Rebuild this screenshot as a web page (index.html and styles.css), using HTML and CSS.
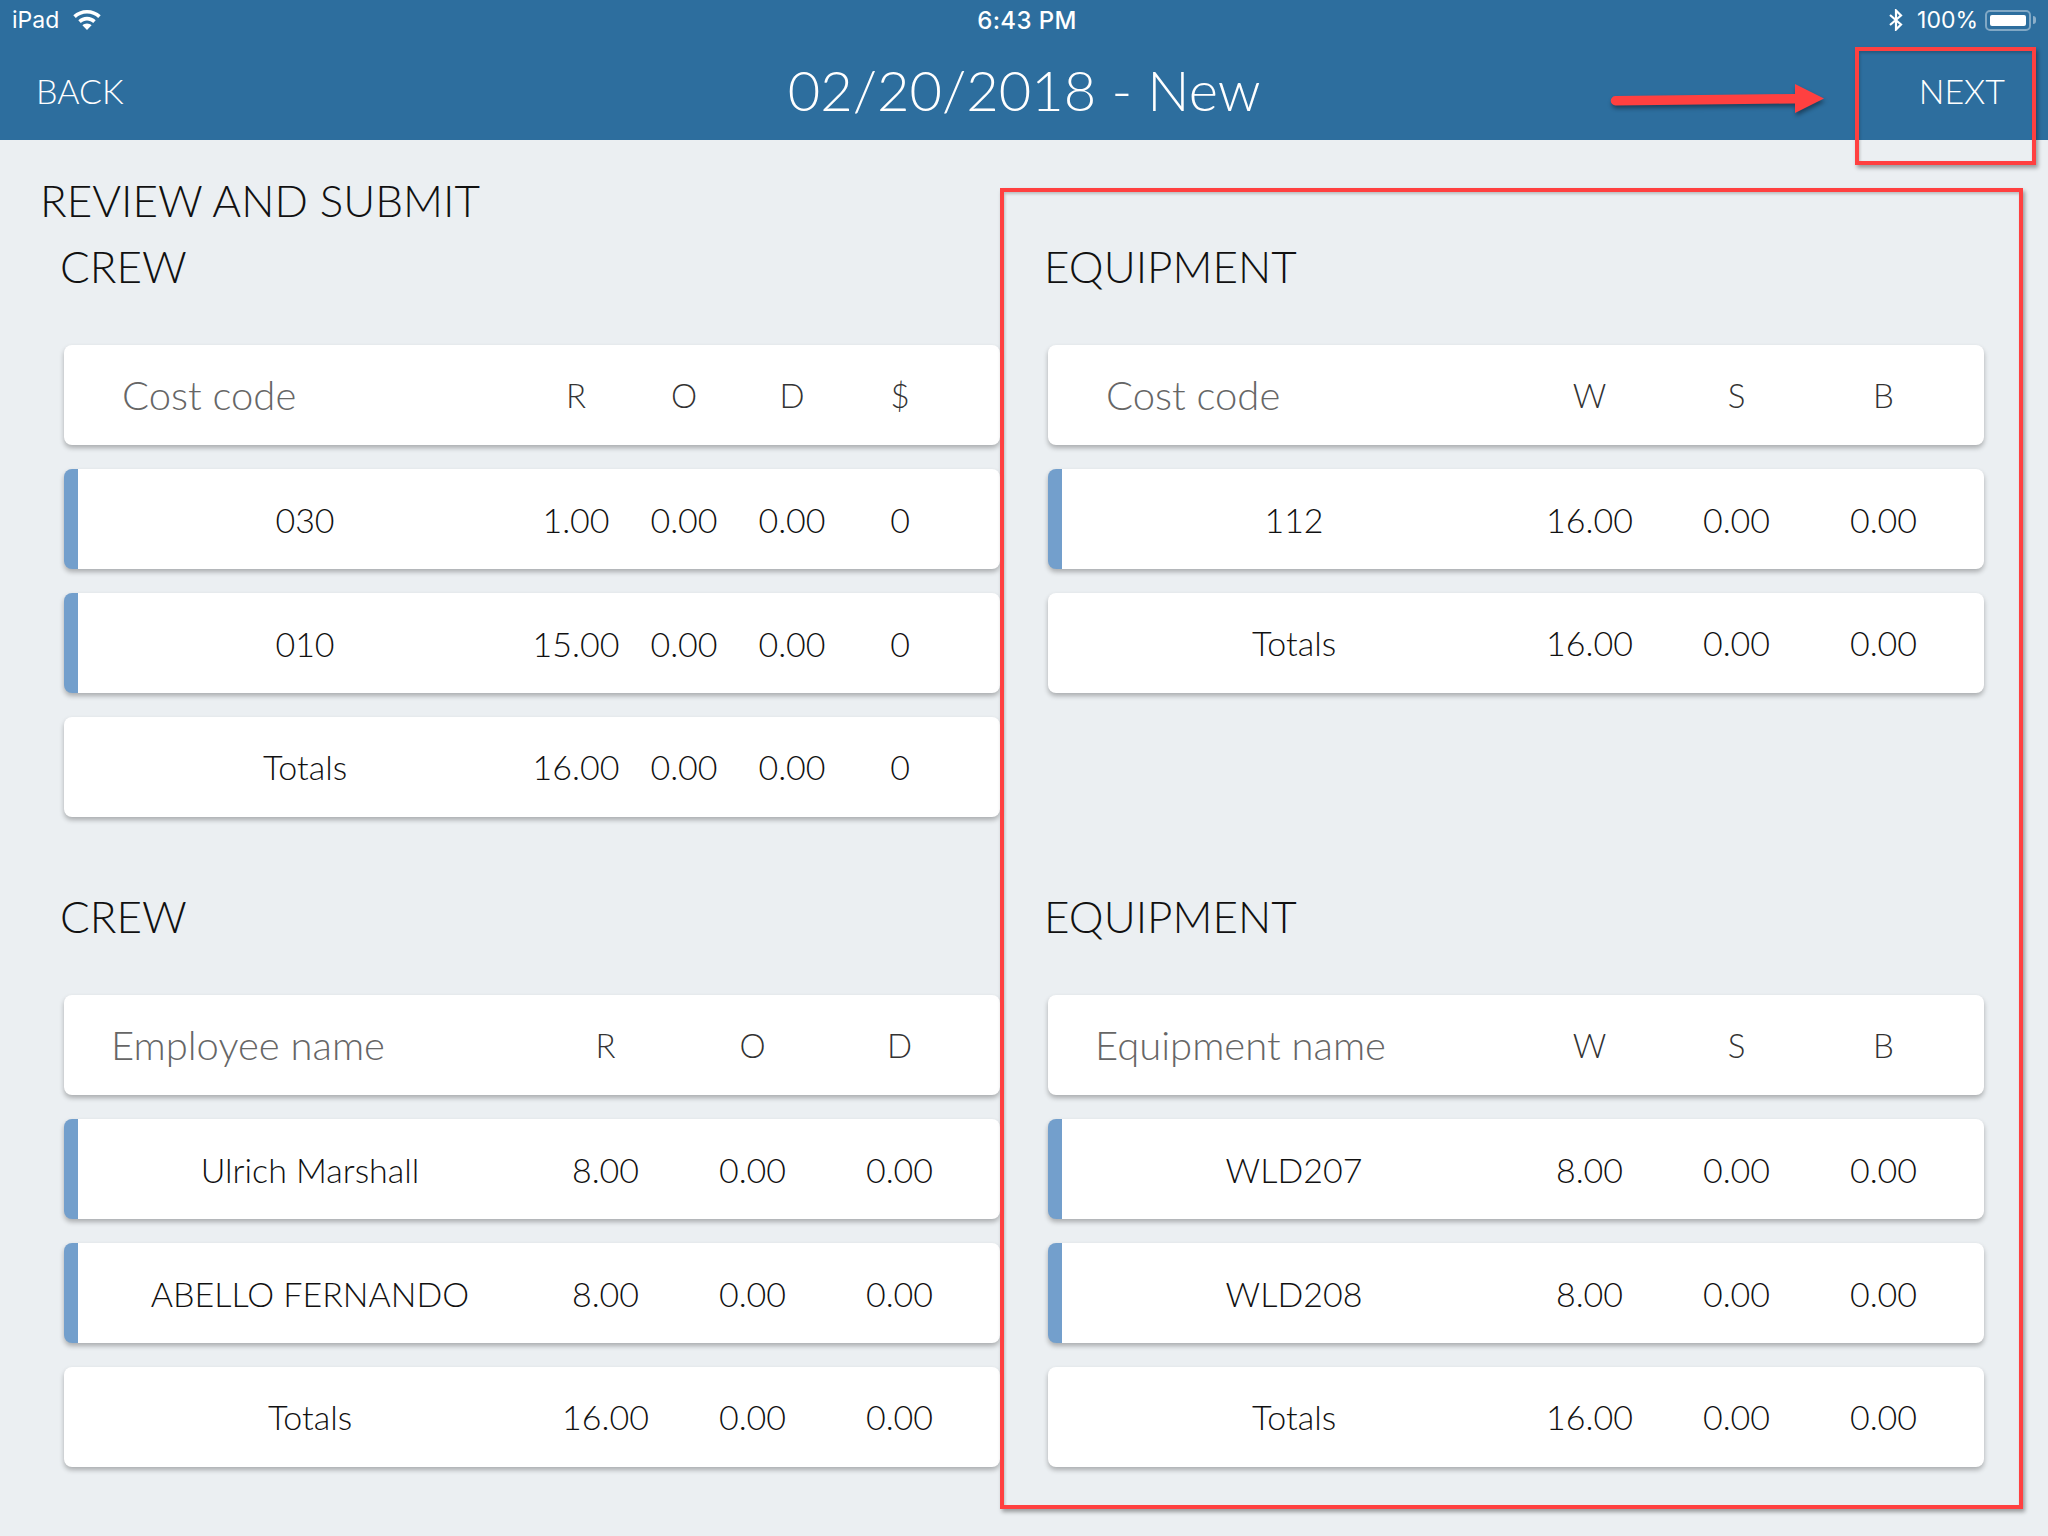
FILE: index.html
```html
<!DOCTYPE html>
<html lang="en">
<head>
<meta charset="utf-8">
<title>Review and submit</title>
<link rel="stylesheet" href="styles.css">
</head>
<body>
<header class="top">
  <div class="status">
    <div class="status-left">
      <span>iPad</span>
      <svg class="wifi" width="28" height="20" viewBox="0 0 28 20"><path fill="#fff" d="M14 0C8.700 0 3.900 2 .3 5.300l2.500 2.700C5.700 5.300 9.600 3.600 14 3.600s8.300 1.700 11.200 4.400l2.500-2.700C24.100 2 19.300 0 14 0zM14 6.800c-3.400 0-6.400 1.300-8.700 3.400l2.500 2.700c1.600-1.500 3.800-2.500 6.200-2.500s4.600 1 6.200 2.500l2.500-2.700c-2.300-2.100-5.300-3.400-8.700-3.400zM14 13.500c-1.800 0-3.400.7-4.600 1.800L14 20l4.600-4.700c-1.200-1.100-2.800-1.800-4.600-1.800z"/></svg>
    </div>
    <div class="status-time">6:43 PM</div>
    <div class="status-right">
      <svg class="bt" width="14" height="22" viewBox="0 0 14 22"><path fill="none" stroke="#fff" stroke-width="2.200" d="M1 6l11 9.500L7 20.500V1.500l5 5L1 16"/></svg>
      <span>100%</span>
      <span class="battery"><span class="battery-fill"></span></span>
      <span class="battery-cap"></span>
    </div>
  </div>
  <nav class="nav">
    <span class="nav-link">BACK</span>
    <h1 class="nav-title">02/20/2018 - New</h1>
    <span class="nav-link">NEXT</span>
  </nav>
</header>

<main class="page">
  <h2 class="page-title">REVIEW AND SUBMIT</h2>
  <div class="board">
    <section class="section">
      <h3 class="section-title">CREW</h3>
      <div class="card head four"><span class="name">Cost code</span><span>R</span><span>O</span><span>D</span><span>$</span></div>
      <div class="card bar four"><span>030</span><span>1.00</span><span>0.00</span><span>0.00</span><span>0</span></div>
      <div class="card bar four"><span>010</span><span>15.00</span><span>0.00</span><span>0.00</span><span>0</span></div>
      <div class="card four"><span>Totals</span><span>16.00</span><span>0.00</span><span>0.00</span><span>0</span></div>
    </section>
    <section class="section right">
      <h3 class="section-title">EQUIPMENT</h3>
      <div class="card head three"><span class="name">Cost code</span><span>W</span><span>S</span><span>B</span></div>
      <div class="card bar three"><span>112</span><span>16.00</span><span>0.00</span><span>0.00</span></div>
      <div class="card three"><span>Totals</span><span>16.00</span><span>0.00</span><span>0.00</span></div>
    </section>
    <section class="section">
      <h3 class="section-title">CREW</h3>
      <div class="card head three wide-name"><span class="name">Employee name</span><span>R</span><span>O</span><span>D</span></div>
      <div class="card bar three"><span>Ulrich Marshall</span><span>8.00</span><span>0.00</span><span>0.00</span></div>
      <div class="card bar three"><span>ABELLO FERNANDO</span><span>8.00</span><span>0.00</span><span>0.00</span></div>
      <div class="card three"><span>Totals</span><span>16.00</span><span>0.00</span><span>0.00</span></div>
    </section>
    <section class="section right">
      <h3 class="section-title">EQUIPMENT</h3>
      <div class="card head three wide-name"><span class="name">Equipment name</span><span>W</span><span>S</span><span>B</span></div>
      <div class="card bar three"><span>WLD207</span><span>8.00</span><span>0.00</span><span>0.00</span></div>
      <div class="card bar three"><span>WLD208</span><span>8.00</span><span>0.00</span><span>0.00</span></div>
      <div class="card three"><span>Totals</span><span>16.00</span><span>0.00</span><span>0.00</span></div>
    </section>
  </div>
</main>

<div class="mark mark-next"></div>
<div class="mark mark-panel"></div>
<svg class="arrow" width="220" height="40" viewBox="0 0 220 40"><path fill="#ff4040" d="M9.500 17 189 15V5l29 14.500L189 34V24.500L9.500 26.500a4.750 4.750 0 0 1 0-9.500z"/></svg>
</body>
</html>
```
FILE: styles.css
```css
* { box-sizing: border-box; }
html, body { margin: 0; padding: 0; }
body {
  width: 2048px;
  height: 1536px;
  position: relative;
  overflow: hidden;
  background: #ebeff2;
  font-family: "Lato", "Liberation Sans", sans-serif;
  font-weight: 300;
  color: #111;
}
.top { height: 140px; background: #2d6e9e; color: #fff; }
.status {
  height: 40px;
  padding: 0 12px 0 12px;
  display: grid;
  grid-template-columns: 1fr auto 1fr;
  align-items: center;
  font-family: "Inter", "Liberation Sans", sans-serif;
  font-size: 23px;
  font-weight: 400;
}
.status-left { display: flex; align-items: center; gap: 14px; }
.wifi { display: block; }
.status-time { font-weight: 500; font-size: 24px; letter-spacing: .4px; padding-left: 6px; }
.status-right { display: flex; align-items: center; justify-content: flex-end; }
.bt { margin-right: 14px; display: block; }
.battery {
  width: 46px;
  height: 21px;
  margin-left: 7px;
  padding: 3px;
  border: 2px solid rgba(255, 255, 255, .4);
  border-radius: 5px;
  display: block;
}
.battery-fill { display: block; height: 100%; background: #fff; border-radius: 2px; }
.battery-cap {
  width: 3px;
  height: 8px;
  margin-left: 2px;
  background: rgba(255, 255, 255, .45);
  border-radius: 0 3px 3px 0;
}
.nav {
  height: 100px;
  padding: 0 43px 0 36px;
  display: flex;
  align-items: center;
  justify-content: space-between;
}
.nav-link { font-size: 34px; }
.nav-title { margin: 0 0 0 6px; font-size: 56px; font-weight: 300; line-height: 1; }

.page { padding: 33px 0 0 40px; }
.page-title { margin: 0 0 1px; font-size: 44px; font-weight: 300; line-height: 54px; }
.board {
  display: grid;
  grid-template-columns: 940px 936px;
  grid-auto-rows: 650px;
  column-gap: 48px;
  padding-left: 20px;
}
.section { display: flex; flex-direction: column; gap: 24px; padding-left: 4px; }
.section.right { padding-left: 0; }
.section-title {
  margin: 0 0 17px -4px;
  height: 76px;
  font-size: 44px;
  font-weight: 300;
  line-height: 76px;
}
.section.right .section-title { margin-left: -4px; }
.card {
  height: 100px;
  background: #fff;
  border-radius: 8px;
  box-shadow: 0 3px 5px rgba(0, 0, 0, .28);
  display: grid;
  align-items: center;
  text-align: center;
  font-size: 34px;
  overflow: hidden;
}
.card:last-child { padding-bottom: 2px; }
.four { grid-template-columns: 1fr repeat(4, 108px); padding: 0 46px 0 24px; }
.three { grid-template-columns: 1fr repeat(3, 147px); padding: 0 27px 0 24px; }
.bar { border-left: 14px solid #739fcc; padding-left: 10px; }
.head { font-size: 33px; color: #333; }
.head .name {
  text-align: left;
  padding-left: 34px;
  color: #666;
  font-size: 40px;
}
.wide-name .name { padding-left: 23px; }

.mark {
  position: absolute;
  border: 4px solid #ff4040;
  box-shadow: 2px 3px 4px rgba(0, 0, 0, .35), inset 1px 2px 3px rgba(0, 0, 0, .2);
}
.mark-next { left: 1855px; top: 47px; width: 181px; height: 118px; }
.mark-panel { left: 1000px; top: 188px; width: 1023px; height: 1321px; }
.arrow {
  position: absolute;
  left: 1606px;
  top: 79px;
  filter: drop-shadow(1px 3px 2px rgba(0, 0, 0, .4));
}
```
